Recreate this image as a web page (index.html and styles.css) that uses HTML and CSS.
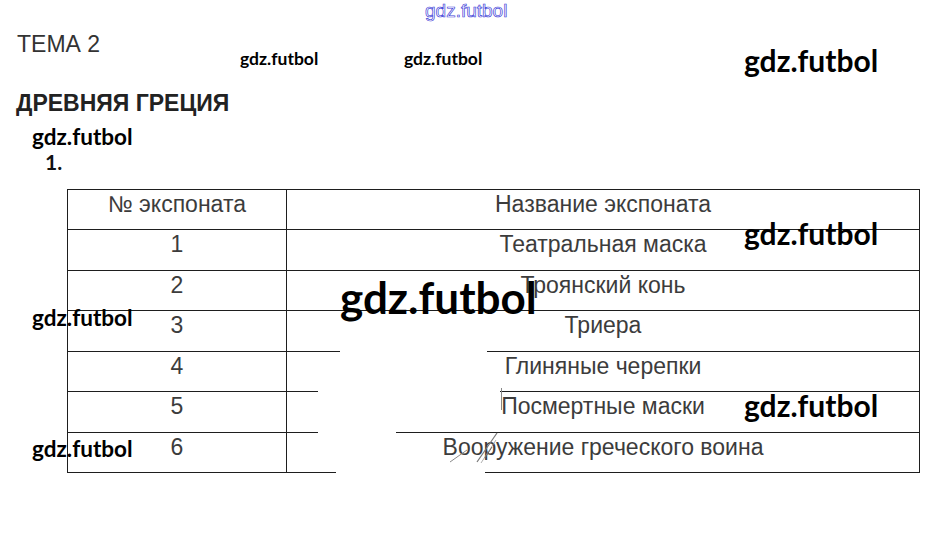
FILE: index.html
```html
<!DOCTYPE html>
<html lang="ru">
<head>
<meta charset="utf-8">
<title>Тема 2</title>
<link rel="stylesheet" href="styles.css">
</head>
<body>
<div class="page">
  <div class="topic">ТЕМА 2</div>
  <h1 class="title">ДРЕВНЯЯ ГРЕЦИЯ</h1>
  <div class="task">1.</div>
  <table class="exhibits">
    <tr class="r40"><td class="num">№ экспоната</td><td class="name">Название экспоната</td></tr>
    <tr class="r41"><td class="num">1</td><td class="name">Театральная маска</td></tr>
    <tr class="r40"><td class="num">2</td><td class="name">Троянский конь</td></tr>
    <tr class="r41"><td class="num">3</td><td class="name">Триера</td></tr>
    <tr class="r40"><td class="num">4</td><td class="name">Глиняные черепки</td></tr>
    <tr class="r41"><td class="num">5</td><td class="name">Посмертные маски</td></tr>
    <tr class="r40"><td class="num">6</td><td class="name">Вооружение греческого воина</td></tr>
  </table>

  <div class="erase e1"></div>
  <div class="erase e2"></div>
  <div class="erase e3"></div>
  <div class="erase e4"></div>
  <svg class="scratch" width="56" height="36" viewBox="0 0 56 36">
    <path d="M4 32 L21 20" stroke="#8a8a8a" stroke-width="1" fill="none"/>
    <path d="M31 32 L51 3" stroke="#777" stroke-width="1.2" fill="none"/>
    <path d="M35 33 L50 10" stroke="#999" stroke-width="0.8" fill="none"/>
    <path d="M39 28 L46 17" stroke="#666" stroke-width="1" fill="none"/>
  </svg>
  <div class="tick"></div>

  <div class="wm outline">gdz.futbol</div>
  <div class="wm s w1">gdz.futbol</div>
  <div class="wm s w2">gdz.futbol</div>
  <div class="wm l w3">gdz.futbol</div>
  <div class="wm m w4">gdz.futbol</div>
  <div class="wm l w5">gdz.futbol</div>
  <div class="wm xl w6">gdz.futbol</div>
  <div class="wm m w7">gdz.futbol</div>
  <div class="wm l w8">gdz.futbol</div>
  <div class="wm m w9">gdz.futbol</div>
</div>
</body>
</html>
```
FILE: styles.css
```css
html, body {
  margin: 0;
  padding: 0;
  background: #fff;
}
.page {
  position: relative;
  width: 931px;
  height: 552px;
  overflow: hidden;
  padding: 30px 0 0 0;
  box-sizing: border-box;
  font-family: "Liberation Sans", Arial, sans-serif;
  color: #2a2a2a;
}
.topic {
  margin-left: 17px;
  font-size: 23px;
  line-height: 28px;
  font-weight: 400;
  color: #333;
}
.title {
  margin: 31px 0 0 16px;
  font-size: 23px;
  line-height: 28px;
  font-weight: 700;
  color: #222;
}
.task {
  margin: 33px 0 0 45px;
  font-family: Lato, "Liberation Sans", sans-serif;
  font-weight: 700;
  font-size: 21px;
  line-height: 24px;
  color: #111;
}
.exhibits {
  margin: 15px 0 0 67px;
  border-collapse: collapse;
  width: 853px;
  table-layout: fixed;
}
.exhibits td {
  border: 1px solid #1e1e1e;
  padding: 1px 0 0 0;
  vertical-align: top;
  text-align: center;
  font-size: 23px;
  line-height: 26px;
  color: #3c3c3c;
}
.exhibits td.num {
  width: 218px;
}
.r40 td { height: 38px; }
.r41 td { height: 39px; }

.erase {
  position: absolute;
  background: #fff;
}
.e1 { left: 340px; top: 346px; width: 147px; height: 10px; }
.e2 { left: 318px; top: 386px; width: 182px; height: 10px; }
.e3 { left: 318px; top: 427px; width: 78px; height: 10px; }
.e4 { left: 336px; top: 467px; width: 149px; height: 10px; }
.scratch {
  position: absolute;
  left: 446px;
  top: 430px;
}
.tick {
  position: absolute;
  left: 501px;
  top: 388px;
  width: 1px;
  height: 22px;
  background: #888;
}

.wm {
  position: absolute;
  font-family: Lato, "Open Sans", sans-serif;
  font-weight: 700;
  color: #000;
  white-space: nowrap;
  line-height: 1;
}
.outline {
  left: 425px;
  top: 1px;
  font-family: "Liberation Sans", Arial, sans-serif;
  font-weight: 400;
  font-size: 19px;
  color: #fff;
  -webkit-text-stroke: 0.7px #3f3fd8;
}
.s { font-size: 17.5px; }
.m { font-size: 22.5px; }
.l { font-size: 30px; }
.xl { font-size: 44px; }
.w1 { left: 240px; top: 50px; }
.w2 { left: 404px; top: 50px; }
.w3 { left: 744px; top: 45px; }
.w4 { left: 32px; top: 126px; }
.w5 { left: 744px; top: 218px; }
.w6 { left: 340px; top: 275px; }
.w7 { left: 32px; top: 307px; }
.w8 { left: 744px; top: 390px; }
.w9 { left: 32px; top: 438px; }
```
